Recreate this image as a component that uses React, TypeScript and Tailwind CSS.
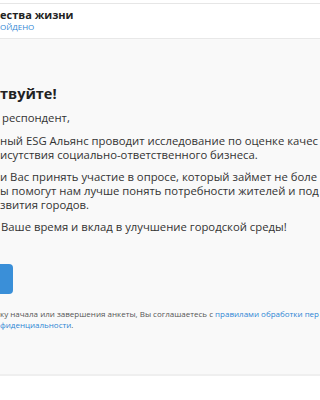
import React from "react";

const font = { fontFamily: '"Open Sans", "Noto Sans", sans-serif' };

export default function App() {
  return (
    <div className="w-[320px] h-[400px] overflow-hidden bg-white" style={font}>
      {/* Шапка */}
      <div className="mt-[3px] border-t border-[#e6e6e6]">
        <div className="h-[35px] bg-white border-b border-[#e8e8e8] pt-[4px]">
          <div className="whitespace-nowrap text-[11px] leading-[14px] font-bold text-[#222]">ества жизни</div>
          <div className="whitespace-nowrap text-[8px] leading-[9px] text-[#2f86d4] uppercase">ойдено</div>
        </div>
      </div>

      {/* Контент */}
      <div className="h-[337px] bg-[#f9f9f9] border-b-2 border-[#efefef] pt-[45px] text-[#333]">
        <h1 className="whitespace-nowrap text-[14.5px] leading-[20px] font-bold text-[#222]">твуйте!</h1>
        <div className="mt-[7px] text-[11.3px] leading-[14px] whitespace-nowrap">
          <p className="pl-[2px]">респондент,</p>
          <p className="mt-[9px]">ный ESG Альянс проводит исследование по оценке качес</p>
          <p>исутствия социально-ответственного бизнеса.</p>
          <p className="mt-[8px]">и Вас принять участие в опросе, который займет не боле</p>
          <p>ы помогут нам лучше понять потребности жителей и под</p>
          <p>звития городов.</p>
          <p className="mt-[8px] pl-[1px]">Ваше время и вклад в улучшение городской среды!</p>
        </div>

        <button className="block mt-[30px] w-[13px] h-[30px] bg-[#3a8fd8] rounded-r-[4px]" />

        <div className="mt-[14px] text-[8px] leading-[11px] text-[#555] whitespace-nowrap">
          <p>
            ку начала или завершения анкеты, Вы соглашаетесь с{" "}
            <span className="text-[#2f86d4]">правилами обработки пер</span>
          </p>
          <p>
            <span className="text-[#2f86d4]">фиденциальности</span>.
          </p>
        </div>
      </div>
    </div>
  );
}
